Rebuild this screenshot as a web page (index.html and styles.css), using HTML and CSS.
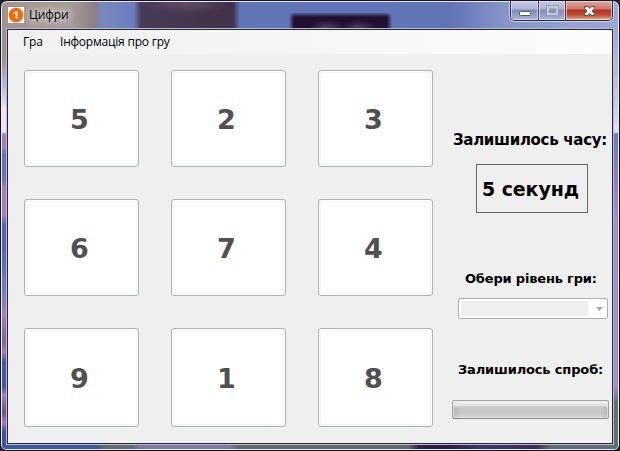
FILE: index.html
```html
<!DOCTYPE html>
<html lang="uk">
<head>
<meta charset="utf-8">
<title>Цифри</title>
<link rel="stylesheet" href="styles.css">
</head>
<body>
<div class="window">
  <header class="titlebar">
    <svg class="app-icon" width="16" height="16" viewBox="0 0 16 16"><rect width="16" height="16" fill="#fff"/><circle cx="8" cy="8" r="7.3" fill="#ff6600"/><path d="M5.7 5.6 8 4h1.4v8H7.600V6.200l-1.900.8z" fill="#fff"/></svg>
    <span class="title">Цифри</span>
    <div class="controls">
      <div class="control min"><svg width="27" height="18" viewBox="0 0 27 18"><rect x="8.500" y="9.500" width="11" height="4" rx=".8" fill="#fff" stroke="#555a70"/></svg></div>
      <div class="control max"><svg width="26" height="18" viewBox="0 0 26 18"><rect x="9" y="5" width="9" height="7" fill="none" stroke="#c3c8dc" stroke-width="2"/><rect x="7.500" y="3.500" width="12" height="10" fill="none" stroke="#8f97b5" stroke-width=".7"/><rect x="11" y="7" width="5" height="3" fill="none" stroke="#8f97b5" stroke-width=".8"/></svg></div>
      <div class="control close"><svg width="46" height="18" viewBox="0 0 46 18"><path d="M18.500 4.500h3.600l1.600 2 1.600-2h3.200v1.700l-2.600 2.800 2.600 2.800v1.700h-3.200l-1.600-2-1.600 2h-3.600v-1.700L21 9l-2.500-2.800z" fill="#fff" stroke="#57474f"/></svg></div>
    </div>
  </header>
  <main class="client">
    <nav class="menu"><span class="menu-game">Гра</span><span class="menu-info">Інформація про гру</span></nav>
    <div class="content">
      <section class="tiles">
        <button class="tile">5</button><button class="tile">2</button><button class="tile">3</button>
        <button class="tile">6</button><button class="tile">7</button><button class="tile">4</button>
        <button class="tile">9</button><button class="tile">1</button><button class="tile">8</button>
      </section>
      <aside class="panel">
        <h2 class="label time-label">Залишилось часу:</h2>
        <div class="timer"><span class="timer-text">5 секунд</span></div>
        <h2 class="label level-label">Обери рівень гри:</h2>
        <div class="combo"><span class="combo-value"></span><svg class="arrow" width="7" height="4" viewBox="0 0 7 4"><path d="M0 0h7L3.500 4z" fill="#a8a8a8"/></svg></div>
        <h2 class="label tries-label">Залишилось спроб:</h2>
        <div class="progress"></div>
      </aside>
    </div>
  </main>
</div>
</body>
</html>
```
FILE: styles.css
```css
* { box-sizing: border-box; }
body { margin: 0; width: 620px; height: 451px; overflow: hidden; background: #20252b; }
.window {
  width: 620px; height: 451px; padding: 1px 6px 6px;
  border: 1px solid #15131f; border-radius: 7px 7px 6px 6px;
  box-shadow: inset 0 0 0 1px #e9e9f3;
  background:
    linear-gradient(90deg, #3a57a0 0 95px, #626b70 105px 130px, #8278a4 140px 228px, #5c6967 238px 408px, #2c1d48 418px 450px, #3b3768 480px, #3d2a55 535px, #5f6c74 550px) 0 443px / 100% 7px no-repeat,
    linear-gradient(180deg, #9d908f 0, #9d908f 30px, #b7b2dc 55px, #eee4f3 80px 103px, #a87cba 105px 118px, #6873b8 126px 150px, #a87cba 158px 186px, #5268b0 196px 222px, #7280c0 262px, #a87cba 287px, #82609a 312px, #a87cba 323px, #4058a0 333px 358px, #a87cba 366px, #70508a 384px, #a87cba 394px, #3853a0 402px) 0 28px / 7px 416px no-repeat,
    linear-gradient(180deg, #9ca7d5 0, #c4cae5 70px, #dfe1ef 103px, #6b7bc0 105px, #8c80c1 150px, #a58bca 190px 358px, #61706f 374px) 612px 28px / 7px 416px no-repeat,
    radial-gradient(ellipse, rgba(121,94,123,.5), transparent 70%) 140px -7px / 90px 20px no-repeat,
    radial-gradient(ellipse, rgba(104,80,116,.75), transparent 70%) 308px 19px / 36px 16px no-repeat,
    radial-gradient(ellipse, rgba(104,80,116,.7), transparent 70%) 340px 19px / 36px 16px no-repeat,
    linear-gradient(#6274b8, transparent 5px) 285px 11px / 110px 6px no-repeat,
    linear-gradient(90deg, transparent 288px, #21102f 293px 386px, transparent 391px) 0 12px / 100% 17px no-repeat,
    linear-gradient(90deg, #a0938f 0, #a79b98 70px, #8b7d82 94px, #7989bd 101px, #6b7bbe 133px, #493b55 140px, #423147 232px, #6274b8 239px, #6274b8 450px, #8895c9 505px, #9ca8d8 100%);
}
.titlebar { display: flex; height: 26px; align-items: flex-start; padding-left: 1px; }
.app-icon { margin: 5px 0 0; }
.title {
  margin: 3px auto 0 5px; letter-spacing: -.1px;
  font: 12px/20px "Open Sans", "Noto Sans", sans-serif; color: #000;
  text-shadow: 0 0 7px #fff, 0 0 10px #fff;
}
.controls {
  display: flex; flex: none; width: 103px; height: 20px; margin: -1px 0 0;
  border: 1px solid #292b40; border-top: 0; border-radius: 0 0 5px 5px;
  overflow: hidden; box-shadow: 0 0 0 1px #c7cfea;
  clip-path: inset(0 -1px -1px -1px);
}
.control { flex: none; height: 19px; box-shadow: inset 0 0 0 1px rgba(235,238,250,.65); }
.control svg { display: block; }
.min, .max { background: linear-gradient(#c1c6de 0, #aeb5d4 8px, #7e88b3 9px, #a7b1d6 18px); }
.min { width: 28px; border-right: 1px solid #424863; }
.max { width: 27px; border-right: 1px solid #4c3541; }
.max svg, .min svg, .close svg { position: relative; top: 1px; }
.close { width: 46px; background: linear-gradient(#dfa59e 0, #cd766b 8px, #b53322 9px, #bd4b37 14px, #e0a077 18px); }
.client {
  width: 606px; height: 415px; margin-top: 1px;
  border: 1px solid #292837; box-shadow: 0 0 0 1px #b9bbce;
  background: #efefef;
}
.menu {
  display: flex; height: 24px; background: linear-gradient(90deg, #f0f0f0, #fcfcfc);
  font: 12px/24px "Open Sans", "Noto Sans", sans-serif; color: #000;
}
.menu-game { width: 37px; margin-left: 15px; letter-spacing: -.2px; }
.menu-info { white-space: nowrap; letter-spacing: -.22px; }
.content { display: flex; padding: 16px 0 0 16px; }
.tiles {
  display: grid; grid-template-columns: repeat(3, 115px);
  grid-template-rows: 97px 97px 99px; gap: 32px;
}
.tile {
  padding: 2px 4px 0 0; text-align: center;
  border: 1px solid #aeb2b5; border-radius: 3px; background: #fff;
  box-shadow: inset 0 0 0 1px #fcfcfc, inset 0 0 0 2px #f4f5f5;
  color: #505050; font: bold 27px/32px "DejaVu Sans", sans-serif;
}
.panel { flex: none; width: 163px; margin-left: 17px; }
.label { margin: 0; font-family: "DejaVu Sans", sans-serif; font-weight: bold; color: #000; white-space: nowrap; }
.time-label { height: 20px; margin: 60px 0 0 3px; font-size: 15px; line-height: 20px; letter-spacing: -.3px; }
.timer {
  display: flex; align-items: center; width: 112px; height: 49px;
  margin: 14px 0 0 26px; padding-left: 5px; border: 1px solid #646464;
  font: bold 19px/24px "DejaVu Sans", sans-serif; white-space: nowrap; letter-spacing: -.1px;
}
.level-label { height: 18px; margin: 57px 0 0 15px; font-size: 13px; line-height: 18px; letter-spacing: -.18px; }
.combo {
  display: flex; width: 150px; height: 21px; margin: 10px 0 0 8px; padding: 2px;
  border: 1px solid #afafaf; border-radius: 2px; background: #fff;
}
.combo-value { width: 127px; height: 15px; background: #efefef; }
.arrow { margin: 6px 0 0 8px; }
.tries-label { height: 18px; margin: 42px 0 0 8px; font-size: 13px; line-height: 18px; letter-spacing: -.15px; }
.progress {
  width: 157px; height: 19px; margin: 21px 0 0 2px;
  border: 1px solid #a2a2a2; border-bottom-color: #858585; border-radius: 2px;
  background:
    linear-gradient(90deg, rgba(160,160,160,.4), transparent 8px calc(100% - 8px), rgba(160,160,160,.4)) 0 6px / 100% 11px no-repeat,
    linear-gradient(#f5f5f5 0, #dedede 5px, #c9c9c9 6px, #c9c9c9 12px, #d5d5d5 17px);
  box-shadow: inset 0 0 0 1px rgba(240,240,240,.6);
}
```
